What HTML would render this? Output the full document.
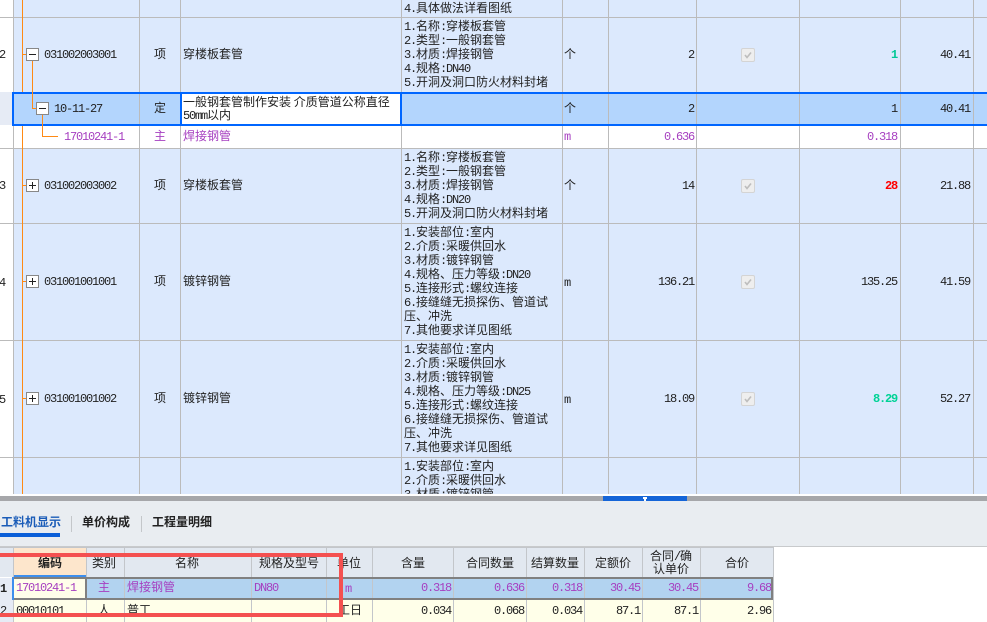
<!DOCTYPE html>
<html lang="zh"><head><meta charset="utf-8"><title>工料机</title>
<style>
html,body{margin:0;padding:0;background:#fff}
#p{position:relative;width:987px;height:622px;overflow:hidden;font:12px/14px "WenQuanYi Zen Hei","Noto Sans CJK SC",sans-serif;color:#222;background:#fff}
#g{position:absolute;left:0;top:0;width:987px;height:494px;overflow:hidden}
#p div{position:absolute}
i{font:12px/14px "Liberation Mono",monospace;letter-spacing:-1.2px;font-style:normal}
b.m{font:bold 12px/14px "Liberation Mono",monospace;letter-spacing:-1.2px}
.t{white-space:nowrap;height:14px}
.v{width:1px;background:#bbb}
.h{height:1px;background:#bbb;left:0;width:987px}
.o{background:#ff8a14}
.d{left:404px;white-space:nowrap;width:157px}
.d span{display:block;height:14px}
.c{width:60px;text-align:center;margin-left:-30px;white-space:nowrap;height:14px}
.x{width:11px;height:11px;border:1px solid #888;background:#fff}
.x:before{content:"";position:absolute;left:2px;top:5px;width:7px;height:1px;background:#222}
.x.pl:after{content:"";position:absolute;left:5px;top:2px;width:1px;height:7px;background:#222}
.cb{left:741px;width:12px;height:12px;background:#eee;border:1px solid #d4d4d4;border-radius:2px}
.cb svg{position:absolute;left:2px;top:2px}
.pu,.pu i{color:#a63fc0}
.hd{background:#e2e8f0}
.bv{width:1px;background:#c3c6ca}
</style></head>
<body><div id="p">
<div id="g">
<div style="left:14px;top:0;width:973px;height:494px;background:#dce9fd"></div>
<div style="left:0;top:92px;width:13px;height:33px;background:#e6ebf5"></div>
<div style="left:14px;top:126px;width:973px;height:22px;background:#fff"></div>
<div style="left:14px;top:94px;width:973px;height:30px;background:#b3d5fd"></div>
<div style="left:182px;top:94px;width:218px;height:30px;background:#fff"></div>

<div class="h" style="top:17px"></div><div class="h" style="top:148px"></div><div class="h" style="top:223px"></div><div class="h" style="top:340px"></div><div class="h" style="top:457px"></div>
<div class="v" style="left:13px;top:0;height:494px"></div>
<div class="v" style="left:139px;top:0;height:494px"></div>
<div class="v" style="left:180px;top:0;height:494px"></div>
<div class="v" style="left:401px;top:0;height:494px"></div>
<div class="v" style="left:562px;top:0;height:494px"></div>
<div class="v" style="left:608px;top:0;height:494px"></div>
<div class="v" style="left:696px;top:0;height:494px"></div>
<div class="v" style="left:799px;top:0;height:494px"></div>
<div class="v" style="left:900px;top:0;height:494px"></div>
<div class="v" style="left:973px;top:0;height:494px"></div>

<div class="o" style="left:22px;top:0;width:1px;height:92px"></div>
<div class="o" style="left:22px;top:126px;width:1px;height:368px"></div>
<div style="left:12px;top:92px;width:975px;height:2px;background:#0066ff"></div>
<div style="left:12px;top:124px;width:975px;height:2px;background:#0066ff"></div>
<div style="left:12px;top:92px;width:2px;height:34px;background:#0066ff"></div>
<div style="left:180px;top:92px;width:2px;height:34px;background:#0066ff"></div>
<div style="left:400px;top:92px;width:2px;height:34px;background:#0066ff"></div>

<div class="o" style="left:23px;top:54px;width:3px;height:1px"></div>
<div class="o" style="left:32px;top:61px;width:1px;height:47px"></div>
<div class="o" style="left:32px;top:108px;width:4px;height:1px"></div>
<div class="o" style="left:42px;top:115px;width:1px;height:21px"></div>
<div class="o" style="left:42px;top:136px;width:16px;height:1px"></div>
<div class="o" style="left:23px;top:185px;width:3px;height:1px"></div>
<div class="o" style="left:23px;top:281px;width:3px;height:1px"></div>
<div class="o" style="left:23px;top:398px;width:3px;height:1px"></div>

<div class="x" style="left:26px;top:48px"></div>
<div class="x" style="left:36px;top:102px"></div>
<div class="x pl" style="left:26px;top:179px"></div>
<div class="x pl" style="left:26px;top:275px"></div>
<div class="x pl" style="left:26px;top:392px"></div>

<div class="t" style="left:-1px;top:47px"><i>2</i></div>
<div class="t" style="left:-1px;top:178px"><i>3</i></div>
<div class="t" style="left:-1px;top:275px"><i>4</i></div>
<div class="t" style="left:-1px;top:392px"><i>5</i></div>

<div class="t" style="left:44px;top:47px"><i>031002003001</i></div>
<div class="t" style="left:54px;top:101px"><i>10-11-27</i></div>
<div class="t pu" style="left:64px;top:129px"><i>17010241-1</i></div>
<div class="t" style="left:44px;top:178px"><i>031002003002</i></div>
<div class="t" style="left:44px;top:274px"><i>031001001001</i></div>
<div class="t" style="left:44px;top:391px"><i>031001001002</i></div>

<div class="c" style="left:160px;top:47px">项</div>
<div class="c" style="left:160px;top:101px">定</div>
<div class="c pu" style="left:160px;top:129px">主</div>
<div class="c" style="left:160px;top:178px">项</div>
<div class="c" style="left:160px;top:274px">项</div>
<div class="c" style="left:160px;top:391px">项</div>

<div class="t" style="left:183px;top:47px">穿楼板套管</div>
<div class="t" style="left:183px;top:95px">一般钢套管制作安装 介质管道公称直径</div>
<div class="t" style="left:183px;top:108px"><i>50mm</i>以内</div>
<div class="t pu" style="left:183px;top:129px">焊接钢管</div>
<div class="t" style="left:183px;top:178px">穿楼板套管</div>
<div class="t" style="left:183px;top:274px">镀锌钢管</div>
<div class="t" style="left:183px;top:391px">镀锌钢管</div>

<div class="d" style="top:1px"><span><i>4.</i>具体做法详看图纸</span></div>
<div class="d" style="top:19px"><span><i>1.</i>名称<i>:</i>穿楼板套管</span><span><i>2.</i>类型<i>:</i>一般钢套管</span><span><i>3.</i>材质<i>:</i>焊接钢管</span><span><i>4.</i>规格<i>:DN40</i></span><span><i>5.</i>开洞及洞口防火材料封堵</span></div>
<div class="d" style="top:150px"><span><i>1.</i>名称<i>:</i>穿楼板套管</span><span><i>2.</i>类型<i>:</i>一般钢套管</span><span><i>3.</i>材质<i>:</i>焊接钢管</span><span><i>4.</i>规格<i>:DN20</i></span><span><i>5.</i>开洞及洞口防火材料封堵</span></div>
<div class="d" style="top:225px"><span><i>1.</i>安装部位<i>:</i>室内</span><span><i>2.</i>介质<i>:</i>采暖供回水</span><span><i>3.</i>材质<i>:</i>镀锌钢管</span><span><i>4.</i>规格、压力等级<i>:DN20</i></span><span><i>5.</i>连接形式<i>:</i>螺纹连接</span><span><i>6.</i>接缝缝无损探伤、管道试</span><span>压、冲洗</span><span><i>7.</i>其他要求详见图纸</span></div>
<div class="d" style="top:342px"><span><i>1.</i>安装部位<i>:</i>室内</span><span><i>2.</i>介质<i>:</i>采暖供回水</span><span><i>3.</i>材质<i>:</i>镀锌钢管</span><span><i>4.</i>规格、压力等级<i>:DN25</i></span><span><i>5.</i>连接形式<i>:</i>螺纹连接</span><span><i>6.</i>接缝缝无损探伤、管道试</span><span>压、冲洗</span><span><i>7.</i>其他要求详见图纸</span></div>
<div class="d" style="top:459px"><span><i>1.</i>安装部位<i>:</i>室内</span><span><i>2.</i>介质<i>:</i>采暖供回水</span><span><i>3.</i>材质<i>:</i>镀锌钢管</span></div>

<div class="t" style="left:564px;top:47px">个</div>
<div class="t" style="left:564px;top:101px">个</div>
<div class="t pu" style="left:564px;top:129px"><i>m</i></div>
<div class="t" style="left:564px;top:178px">个</div>
<div class="t" style="left:564px;top:275px"><i>m</i></div>
<div class="t" style="left:564px;top:392px"><i>m</i></div>

<div class="t" style="right:293px;top:47px"><i>2</i></div>
<div class="t" style="right:293px;top:101px"><i>2</i></div>
<div class="t pu" style="right:293px;top:129px"><i>0.636</i></div>
<div class="t" style="right:293px;top:178px"><i>14</i></div>
<div class="t" style="right:293px;top:274px"><i>136.21</i></div>
<div class="t" style="right:293px;top:391px"><i>18.09</i></div>

<div class="cb" style="top:48px"><svg width="8" height="8" viewBox="0 0 8 8"><path d="M1 4l2 2.500 4-5" fill="none" stroke="#bdbdbd" stroke-width="1.600"/></svg></div>
<div class="cb" style="top:179px"><svg width="8" height="8" viewBox="0 0 8 8"><path d="M1 4l2 2.500 4-5" fill="none" stroke="#bdbdbd" stroke-width="1.600"/></svg></div>
<div class="cb" style="top:275px"><svg width="8" height="8" viewBox="0 0 8 8"><path d="M1 4l2 2.500 4-5" fill="none" stroke="#bdbdbd" stroke-width="1.600"/></svg></div>
<div class="cb" style="top:392px"><svg width="8" height="8" viewBox="0 0 8 8"><path d="M1 4l2 2.500 4-5" fill="none" stroke="#bdbdbd" stroke-width="1.600"/></svg></div>

<div class="t" style="right:90px;top:47px"><b class="m" style="color:#00c896">1</b></div>
<div class="t" style="right:90px;top:101px"><i>1</i></div>
<div class="t pu" style="right:90px;top:129px"><i>0.318</i></div>
<div class="t" style="right:90px;top:178px"><b class="m" style="color:#f00">28</b></div>
<div class="t" style="right:90px;top:274px"><i>135.25</i></div>
<div class="t" style="right:90px;top:391px"><b class="m" style="color:#00d296">8.29</b></div>

<div class="t" style="right:17px;top:47px"><i>40.41</i></div>
<div class="t" style="right:17px;top:101px"><i>40.41</i></div>
<div class="t" style="right:17px;top:178px"><i>21.88</i></div>
<div class="t" style="right:17px;top:274px"><i>41.59</i></div>
<div class="t" style="right:17px;top:391px"><i>52.27</i></div>
</div>

<div style="left:0;top:496px;width:987px;height:5px;background:#a6a7aa"></div>
<div style="left:603px;top:496px;width:84px;height:5px;background:#1565d8"></div>
<div style="left:643px;top:497px;width:4px;height:2px;background:#fff"></div>
<div style="left:644px;top:499px;width:2px;height:2px;background:#fff"></div>

<div style="left:0;top:501px;width:987px;height:45px;background:#e9edf1"></div>
<div style="left:0;top:546px;width:987px;height:1px;background:#c8cacc"></div>
<div class="t" style="left:1px;top:515px;font-weight:bold;color:#1a5cb8;letter-spacing:0">工料机显示</div>
<div style="left:0;top:533px;width:60px;height:4px;background:#0a5fd8"></div>
<div style="left:71px;top:516px;width:1px;height:16px;background:#c4c7ca"></div>
<div class="t" style="left:82px;top:515px;font-weight:bold;color:#222">单价构成</div>
<div style="left:141px;top:516px;width:1px;height:16px;background:#c4c7ca"></div>
<div class="t" style="left:152px;top:515px;font-weight:bold;color:#222">工程量明细</div>

<div class="hd" style="left:0;top:547px;width:773px;height:30px"></div>
<div style="left:14px;top:547px;width:72px;height:28px;background:#fde6cc"></div>
<div style="left:14px;top:575px;width:72px;height:2px;background:#3d8fee"></div>
<div style="left:0;top:578px;width:13px;height:44px;background:#e6ebf5"></div>
<div style="left:14px;top:578px;width:759px;height:21px;background:#b2d3f0"></div>
<div style="left:14px;top:579px;width:72px;height:19px;background:#fffeea"></div>
<div style="left:14px;top:600px;width:759px;height:22px;background:#ffffe9"></div>

<div class="bv" style="left:13px;top:547px;height:75px"></div>
<div class="bv" style="left:86px;top:547px;height:75px"></div>
<div class="bv" style="left:124px;top:547px;height:75px"></div>
<div class="bv" style="left:251px;top:547px;height:75px"></div>
<div class="bv" style="left:326px;top:547px;height:75px"></div>
<div class="bv" style="left:372px;top:547px;height:75px"></div>
<div class="bv" style="left:453px;top:547px;height:75px"></div>
<div class="bv" style="left:526px;top:547px;height:75px"></div>
<div class="bv" style="left:584px;top:547px;height:75px"></div>
<div class="bv" style="left:642px;top:547px;height:75px"></div>
<div class="bv" style="left:700px;top:547px;height:75px"></div>
<div class="bv" style="left:773px;top:547px;height:75px"></div>
<div style="left:0;top:547px;width:773px;height:1px;background:#c3c6ca"></div>
<div style="left:14px;top:577px;width:759px;height:2px;background:#808080"></div>
<div style="left:14px;top:598px;width:759px;height:2px;background:#808080"></div>
<div style="left:771px;top:577px;width:2px;height:23px;background:#808080"></div>
<div style="left:85px;top:577px;width:2px;height:23px;background:#808080"></div>
<div style="left:12px;top:577px;width:2px;height:23px;background:#3d8fee"></div>

<div class="c" style="left:50px;top:556px;font-weight:bold">编码</div>
<div class="c" style="left:104px;top:556px">类别</div>
<div class="c" style="left:187px;top:556px">名称</div>
<div class="c" style="left:289px;top:556px">规格及型号</div>
<div class="c" style="left:349px;top:556px">单位</div>
<div class="c" style="left:413px;top:556px">含量</div>
<div class="c" style="left:490px;top:556px">合同数量</div>
<div class="c" style="left:555px;top:556px">结算数量</div>
<div class="c" style="left:613px;top:556px">定额价</div>
<div class="c" style="left:671px;top:549px">合同<i>/</i>确</div>
<div class="c" style="left:671px;top:562px">认单价</div>
<div class="c" style="left:737px;top:556px">合价</div>

<div class="t" style="left:0;top:581px"><b class="m">1</b></div>
<div class="t" style="left:0;top:603px"><i>2</i></div>

<div class="t pu" style="left:16px;top:580px"><i>17010241-1</i></div>
<div class="c pu" style="left:104px;top:580px">主</div>
<div class="t pu" style="left:127px;top:580px">焊接钢管</div>
<div class="t pu" style="left:254px;top:580px"><i>DN80</i></div>
<div class="t pu" style="left:345px;top:581px"><i>m</i></div>
<div class="t pu" style="right:536px;top:580px"><i>0.318</i></div>
<div class="t pu" style="right:463px;top:580px"><i>0.636</i></div>
<div class="t pu" style="right:405px;top:580px"><i>0.318</i></div>
<div class="t pu" style="right:347px;top:580px"><i>30.45</i></div>
<div class="t pu" style="right:289px;top:580px"><i>30.45</i></div>
<div class="t pu" style="right:216px;top:580px"><i>9.68</i></div>

<div class="t" style="left:16px;top:603px"><i>00010101</i></div>
<div class="c" style="left:104px;top:603px">人</div>
<div class="t" style="left:127px;top:603px">普工</div>
<div class="t" style="left:338px;top:603px">工日</div>
<div class="t" style="right:536px;top:603px"><i>0.034</i></div>
<div class="t" style="right:463px;top:603px"><i>0.068</i></div>
<div class="t" style="right:405px;top:603px"><i>0.034</i></div>
<div class="t" style="right:347px;top:603px"><i>87.1</i></div>
<div class="t" style="right:289px;top:603px"><i>87.1</i></div>
<div class="t" style="right:216px;top:603px"><i>2.96</i></div>

<div style="left:-6px;top:553px;width:341px;height:56px;border:4px solid #f45050"></div>
</div></body></html>
